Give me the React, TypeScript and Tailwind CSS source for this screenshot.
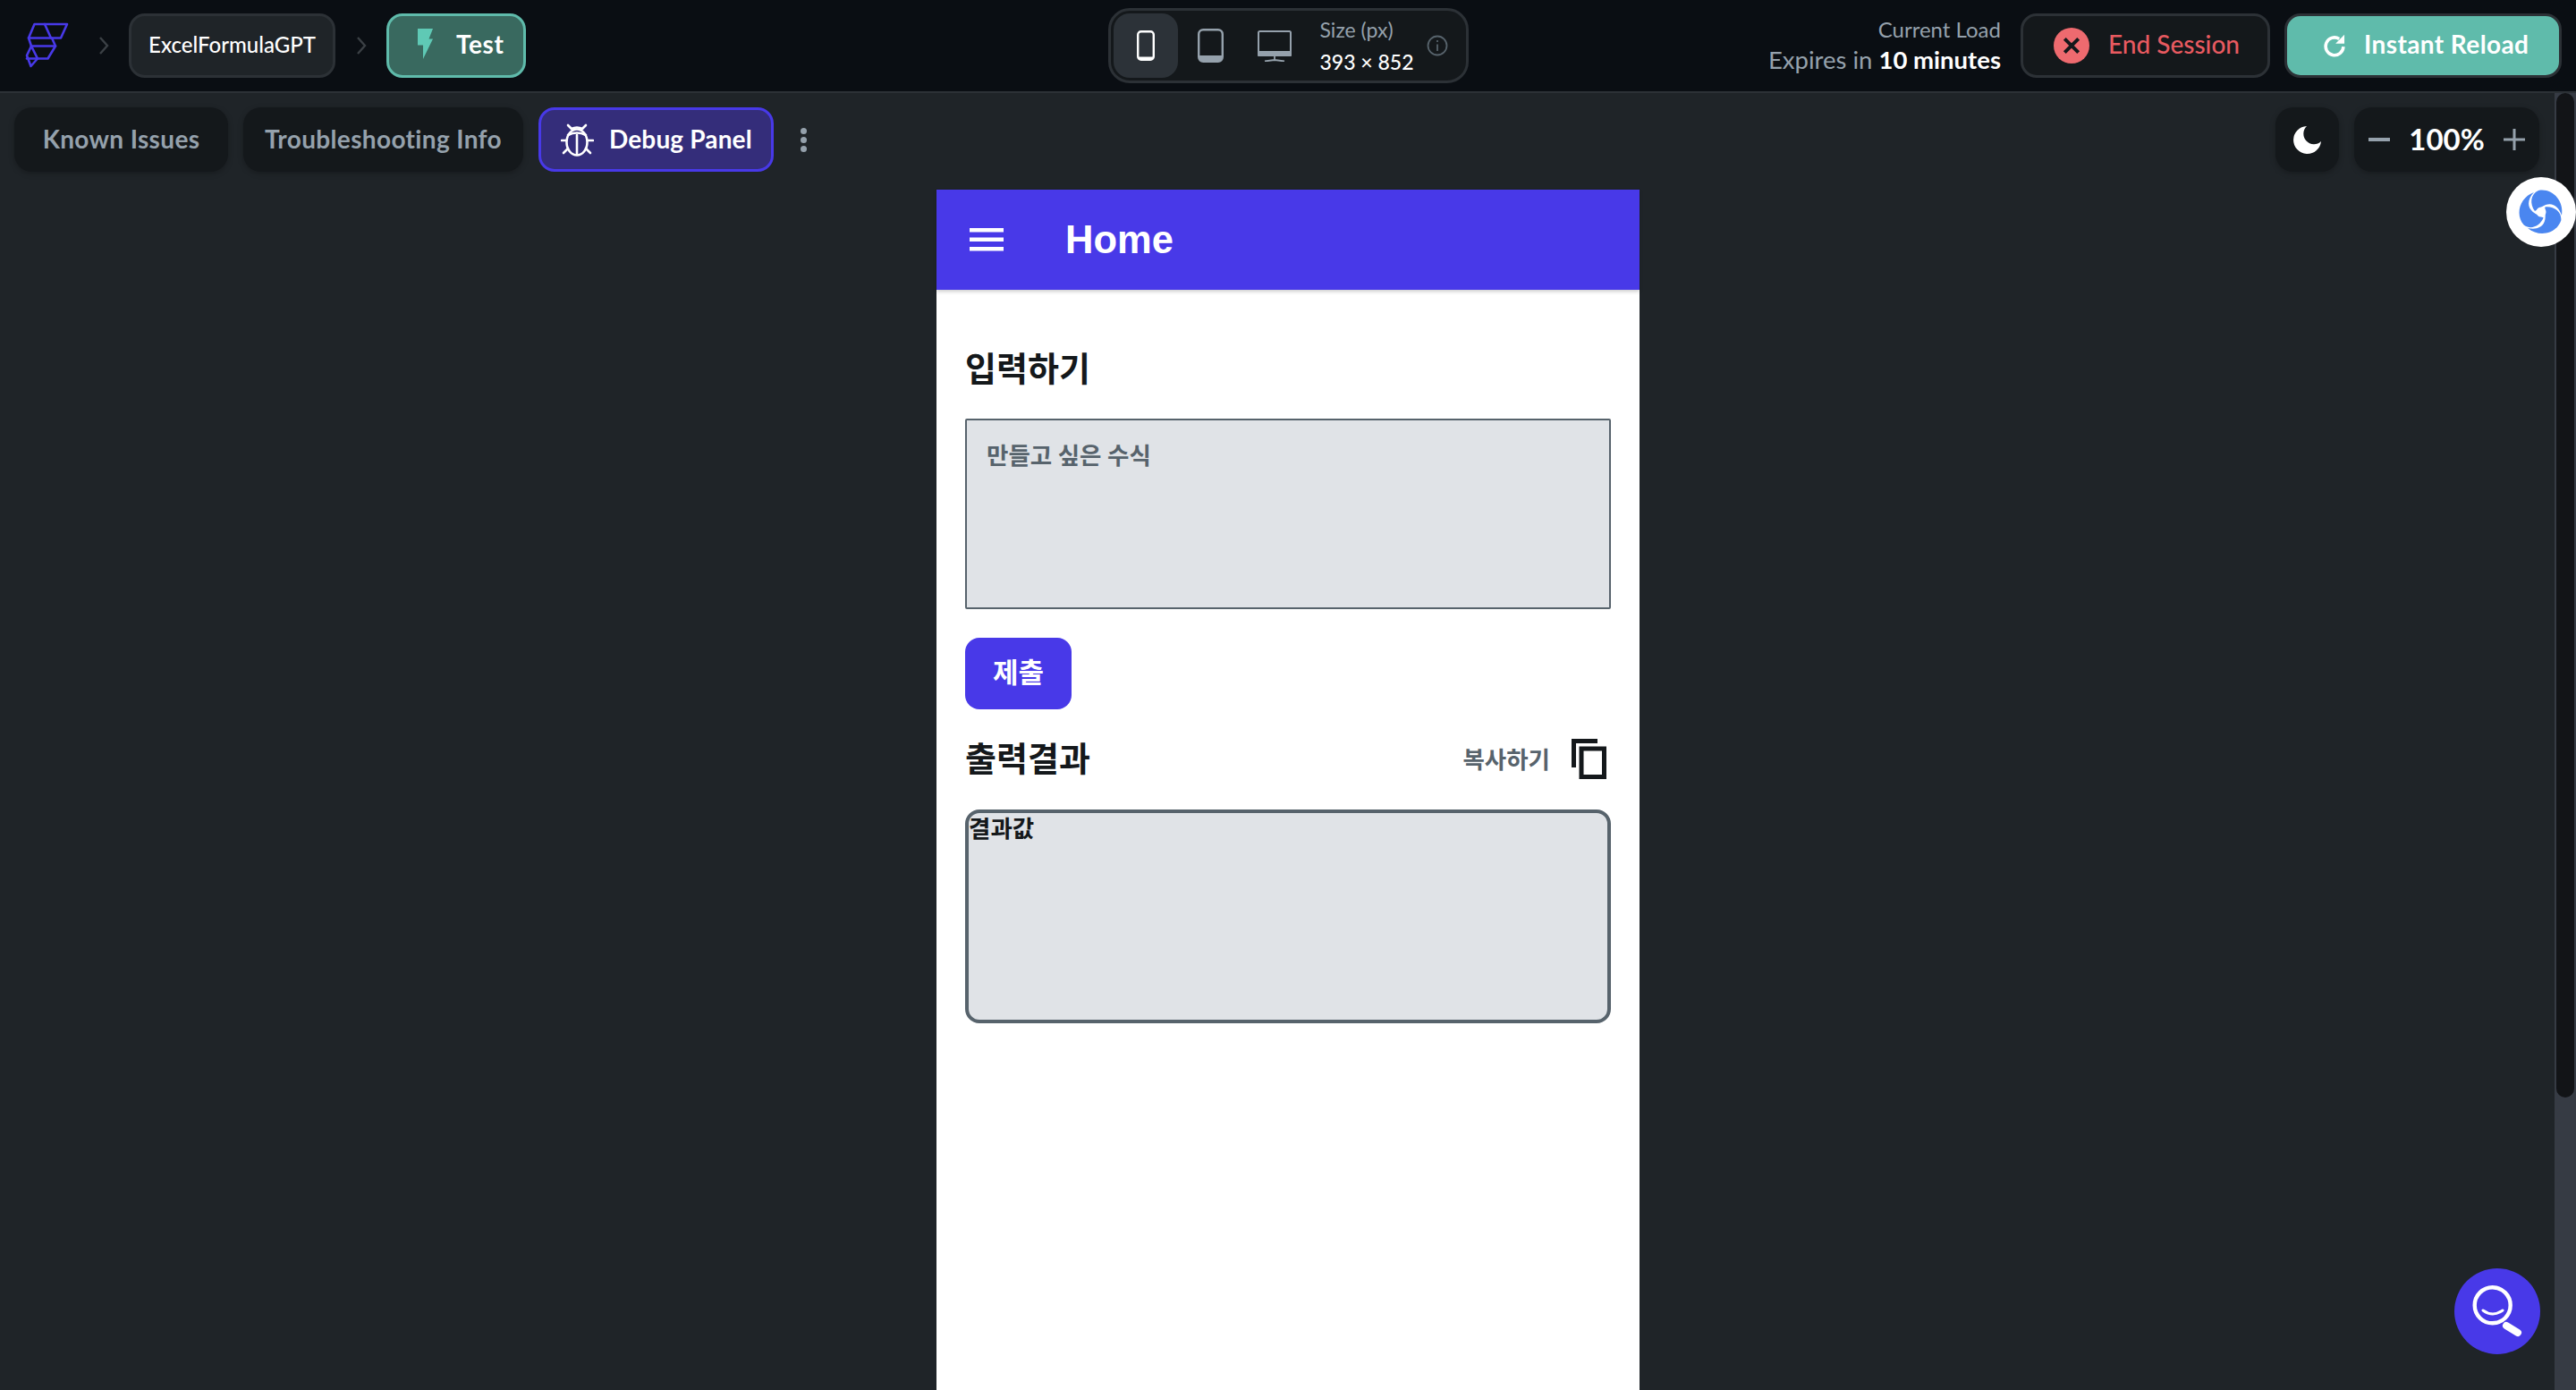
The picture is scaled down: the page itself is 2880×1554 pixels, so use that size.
const sans = "font-['Lato','Noto_Sans',sans-serif]";

function Logo() {
  return (
    <svg viewBox="28 25 50 52" className="w-[50px] h-[52px]" fill="none" stroke="#4839e8" strokeWidth="2.6" strokeLinejoin="round" strokeLinecap="round">
      <path d="M38.5 27 H75 L68 42.5 H32 L38.5 27 Z" />
      <path d="M50 27 L57 42.5" />
      <path d="M32 42.5 L35 51.5 L30 62 L34.5 74 L42 65.5 H53.5 L62 51.5 L58 42.5" />
      <path d="M35 51.5 H62" />
      <path d="M35 51.5 L42 65.5" />
      <path d="M30 65.5 H42" />
    </svg>
  );
}

function Chevron() {
  return (
    <svg viewBox="0 0 12 24" className="w-[12px] h-[24px]" fill="none" stroke="#3b4045" strokeWidth="2.4">
      <path d="M2 3 L10 12 L2 21" />
    </svg>
  );
}

function Bolt() {
  return (
    <svg viewBox="0 0 17 34" className="w-[17px] h-[34px]" fill="#5fc9b5">
      <path d="M0 0 H17 L12.5 11.5 H17 L6 34 V18.5 H0 Z" />
    </svg>
  );
}

function BugIcon() {
  return (
    <svg viewBox="0 0 37 37" className="w-[37px] h-[37px]" fill="none" stroke="white" strokeWidth="2.6" strokeLinecap="round">
      <ellipse cx="18" cy="21" rx="11.5" ry="14.5" />
      <path d="M18 13 V35" />
      <path d="M8 13 Q18 8 28 13" />
      <path d="M12 6 Q18 3 24 6" />
      <path d="M8 2 L12 6 M28 2 L24 6" />
      <path d="M1 19 H6 M30 19 H36" />
      <path d="M3 33 L8 28 M33 33 L28 28" />
    </svg>
  );
}

function Swirl() {
  const blade = "M-3 -24 C12 -27 26 -13 23 4 C20 -6 13 -11 5 -8 C0 -6 -3 -3 -7 -1 C-13 -9 -12 -20 -3 -24 Z";
  return (
    <svg viewBox="-30 -30 60 60" className="w-[60px] h-[60px]" fill="#4a86f0">
      <path d={blade} />
      <path d={blade} transform="rotate(120)" />
      <path d={blade} transform="rotate(240)" />
      <circle r="5.5" fill="white" />
    </svg>
  );
}

function Pill({ children }: { children: React.ReactNode }) {
  return <div className="h-[72px] rounded-[20px] bg-[#14181b] flex items-center shadow-[0_2px_6px_rgba(0,0,0,0.25)]">{children}</div>;
}

export default function App() {
  return (
    <div className={`h-[1554px] w-full overflow-hidden flex flex-col bg-[#1f2428] ${sans}`}>
      <header className="h-[104px] shrink-0 bg-[#0a0e13] border-b-2 border-[#2c3136] grid grid-cols-[1fr_auto_1fr] items-center">
        <div className="flex items-center pl-[28px]">
          <Logo />
          <div className="ml-[32px] mr-[22px]"><Chevron /></div>
          <div className="h-[72px] w-[231px] rounded-[18px] border-[3px] border-[#2c3136] bg-[#1f2428] flex items-center justify-center pb-[2px] text-white text-[24px] font-medium">ExcelFormulaGPT</div>
          <div className="ml-[23px] mr-[22px]"><Chevron /></div>
          <div className="h-[72px] w-[156px] rounded-[18px] border-[3px] border-[#5FBBAB] bg-[#39695f] flex items-center pl-[32px] gap-[26px] pb-[4px] text-white text-[28px] font-bold tracking-[0.6px]">
            <Bolt />
            <span>Test</span>
          </div>
        </div>

        <div className="h-[84px] w-[403px] rounded-[24px] border-[3px] border-[#2c3136] bg-[#14181b] flex items-center pl-[3px]">
          <div className="w-[72px] h-[72px] rounded-[18px] bg-[#2c3238] flex items-center justify-center">
            <svg viewBox="0 0 20 34" className="w-[20px] h-[34px]" fill="none">
              <rect x="1.2" y="1.2" width="17.6" height="31.6" rx="3.5" stroke="white" strokeWidth="2.4" />
              <path d="M1.2 29.5 H18.8 V30 A3 3 0 0 1 15.3 33 H4.7 A3 3 0 0 1 1.2 30 Z" fill="white" />
            </svg>
          </div>
          <div className="ml-[22px]">
            <svg viewBox="0 0 29 38" className="w-[29px] h-[38px] block" fill="none">
              <rect x="1.2" y="1.2" width="26.6" height="35.6" rx="5" stroke="#95a1ac" strokeWidth="2.4" />
              <path d="M1.2 30 H27.8 V33 A4 4 0 0 1 23.8 36.8 H5.2 A4 4 0 0 1 1.2 33 Z" fill="#95a1ac" />
            </svg>
          </div>
          <div className="ml-[38px]">
            <svg viewBox="0 0 38 35" className="w-[38px] h-[35px] block" fill="none">
              <rect x="1" y="1" width="36" height="27" rx="1.5" stroke="#95a1ac" strokeWidth="2" />
              <rect x="0" y="23" width="38" height="6" rx="1" fill="#95a1ac" />
              <path d="M19 29 V33 M8 34.5 L19 33 L30 34.5" stroke="#95a1ac" strokeWidth="1.8" />
            </svg>
          </div>
          <div className="ml-[32px] w-[103px] flex flex-col gap-[10px] whitespace-nowrap">
            <span className="text-[#95a1ac] text-[23px] leading-[26px]">Size (px)</span>
            <span className="text-white text-[23px] leading-[26px] font-medium">393 × 852</span>
          </div>
          <svg viewBox="0 0 24 24" className="ml-[16px] w-[24px] h-[24px]" fill="none" stroke="#57636c" strokeWidth="1.8">
            <circle cx="12" cy="12" r="10.5" />
            <path d="M12 10.5 V18 M12 6 V8" />
          </svg>
        </div>

        <div className="flex items-center justify-end pr-[16px]">
          <div className="flex flex-col items-end gap-[6px] mr-[22px] whitespace-nowrap">
            <span className="text-[#95a1ac] text-[24px] leading-[26px]">Current Load</span>
            <span className="text-[#95a1ac] text-[27.5px] leading-[30px]">Expires in <span className="text-white font-bold">10 minutes</span></span>
          </div>
          <div className="h-[72px] w-[279px] rounded-[18px] border-[3px] border-[#2c3136] bg-[#14181b] flex items-center pl-[34px] gap-[21px]">
            <span className="w-[40px] h-[40px] rounded-full bg-[#ee6a6f] flex items-center justify-center">
              <svg viewBox="0 0 20 20" className="w-[22px] h-[22px]" fill="none" stroke="#14181b" strokeWidth="3.6">
                <path d="M3 3 L17 17 M17 3 L3 17" />
              </svg>
            </span>
            <span className="text-[#e85a60] text-[28px] font-medium pb-[4px]">End Session</span>
          </div>
          <div className="ml-[16px] h-[72px] w-[310px] rounded-[18px] border-[3px] border-[#2c3136] bg-[#5FBBAB] flex items-center pl-[39px] gap-[19px]">
            <svg viewBox="0 0 24 24" className="w-[28px] h-[28px]" fill="none" stroke="white" strokeWidth="3">
              <path d="M20.5 13 A8.5 8.5 0 1 1 16.5 5.5" />
              <path d="M21.5 1.5 V10 H13 Z" fill="white" stroke="none" />
            </svg>
            <span className="text-white text-[28px] font-bold tracking-[0.4px] pb-[4px]">Instant Reload</span>
          </div>
        </div>
      </header>

      <main className="relative flex-1 min-h-0">
        <div className="flex items-center justify-between h-[72px] mt-[16px] pl-[16px] pr-[41px]">
          <div className="flex items-center">
            <Pill><span className="w-[239px] text-center text-[#95a1ac] text-[28px] font-bold tracking-[0.35px] pb-[2px]">Known Issues</span></Pill>
            <div className="ml-[17px]"><Pill><span className="w-[313px] text-center text-[#95a1ac] text-[28px] font-bold tracking-[0.35px] pb-[2px]">Troubleshooting Info</span></Pill></div>
            <div className="ml-[17px] h-[72px] w-[263px] rounded-[18px] border-[3px] border-[#4839e8] bg-[#342d7a] flex items-center pl-[22px] gap-[17px] text-white text-[28px] font-bold tracking-[0.15px]">
              <BugIcon />
              <span className="pb-[2px]">Debug Panel</span>
            </div>
            <div className="ml-[30px] flex flex-col gap-[3px]">
              <span className="w-[7px] h-[7px] rounded-full bg-[#95a1ac]" />
              <span className="w-[7px] h-[7px] rounded-full bg-[#95a1ac]" />
              <span className="w-[7px] h-[7px] rounded-full bg-[#95a1ac]" />
            </div>
          </div>
          <div className="flex items-center gap-[17px]">
            <Pill>
              <span className="w-[71px] flex items-center justify-center">
                <svg viewBox="0 0 32 32" className="w-[32px] h-[32px]" fill="white">
                  <path d="M15 1 A15.5 15.5 0 1 0 31 18 A11 11 0 0 1 15 1 Z" />
                </svg>
              </span>
            </Pill>
            <Pill>
              <span className="w-[207px] flex items-center justify-between px-[16px] text-white text-[33px] font-bold">
                <span className="w-[24px] h-[4px] bg-[#95a1ac]" />
                <span>100%</span>
                <svg viewBox="0 0 24 24" className="w-[24px] h-[24px]" stroke="#95a1ac" strokeWidth="3"><path d="M12 0 V24 M0 12 H24" /></svg>
              </span>
            </Pill>
          </div>
        </div>

        <div className="w-[786px] mx-auto mt-[20px] h-[1400px] bg-white font-['Roboto','Noto_Sans_CJK_KR',sans-serif]">
          <div className="h-[112px] bg-[#4839e8] flex items-center pl-[37px] shadow-[0_2px_4px_rgba(0,0,0,0.2)]">
            <svg viewBox="0 0 38 26" className="w-[38px] h-[26px]" fill="white">
              <rect width="38" height="4.5" y="0" />
              <rect width="38" height="4.5" y="10.5" />
              <rect width="38" height="4.5" y="21" />
            </svg>
            <span className="ml-[69px] pt-[1px] text-white text-[43.5px] font-bold font-['Liberation_Sans',sans-serif]">Home</span>
          </div>
          <div className="px-[32px] flex flex-col">
            <h2 className="mt-[64px] text-[#14181b] text-[38px] leading-[50px] font-bold">입력하기</h2>
            <textarea
              readOnly
              placeholder="만들고 싶은 수식"
              className="mt-[30px] h-[213px] w-full resize-none border-2 border-[#57636c] rounded-[2px] bg-[#e0e3e7] px-[22px] py-[20px] text-[26.5px] leading-[40px] font-semibold placeholder:text-[#57636c] outline-none"
            />
            <button className="mt-[32px] w-[119px] h-[80px] rounded-[16px] bg-[#4839e8] text-white text-[31px] font-bold">제출</button>
            <div className="mt-[28px] h-[54px] flex items-center justify-between pr-[5px]">
              <h2 className="text-[#14181b] text-[38px] pt-[2px] font-bold">출력결과</h2>
              <div className="flex items-center gap-[24px]">
                <span className="text-[#57636c] text-[26.5px] pt-[3px] font-semibold">복사하기</span>
                <svg viewBox="0 0 39 45" className="w-[39px] h-[45px]" fill="none" stroke="#14181b" strokeWidth="5">
                  <path d="M2.5 32 V2.5 H29" />
                  <rect x="11" y="11" width="25.5" height="31.5" />
                </svg>
              </div>
            </div>
            <div className="mt-[30px] h-[239px] border-4 border-[#57636c] rounded-[16px] bg-[#e0e3e7] text-[#14181b] text-[26.5px] leading-[36px] font-semibold">결과값</div>
          </div>
        </div>

        <div className="absolute right-0 top-0 bottom-0 w-[24px] bg-[#363b44]">
          <div className="h-[1123px] mx-[2px] rounded-[10px] bg-[#121417]" />
        </div>
        <div className="absolute right-0 top-[94px] w-[78px] h-[78px] rounded-full bg-white flex items-center justify-center"><Swirl /></div>
        <div className="absolute left-[2744px] top-[1314px] w-[96px] h-[96px] rounded-full bg-[#4839e8] flex items-center justify-center">
          <svg viewBox="0 0 60 60" className="w-[60px] h-[60px]" fill="none" stroke="white" strokeLinecap="round">
            <circle cx="24.7" cy="23.3" r="20" strokeWidth="4.4" />
            <path d="M14 29 Q25 37 36 29" strokeWidth="3" />
            <path d="M40 46 L53 54" strokeWidth="8" />
          </svg>
        </div>
      </main>
    </div>
  );
}
